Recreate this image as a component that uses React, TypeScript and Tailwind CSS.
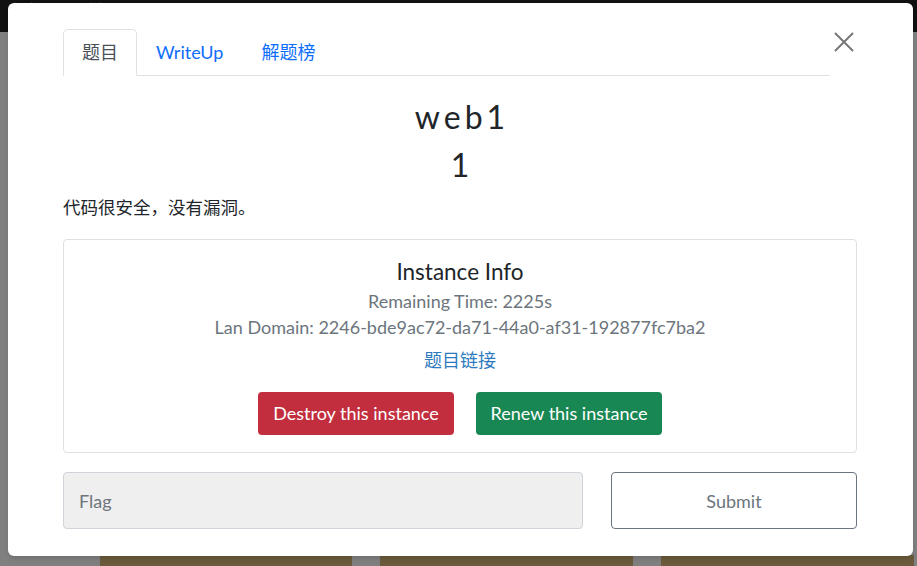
import React, { useState } from 'react';

const font = { fontFamily: 'Lato, "Noto Sans CJK SC", sans-serif' };

const tabs = ['题目', 'WriteUp', '解题榜'];

const App: React.FC = () => {
  const [activeTab, setActiveTab] = useState(0);
  const [flag, setFlag] = useState('');

  return (
    <div className="relative w-full h-[566px] overflow-hidden bg-[#808080]" style={font}>
      {/* page behind the modal */}
      <div className="h-[32px] bg-[#111111] text-[#3a3a3a] text-[14px] px-2 leading-[18px]">实验 · 题目 列表</div>
      <div className="flex gap-[28px] pl-[100px] pt-[523px]">
        <div className="w-[252px] h-[20px] bg-[#6b5b3c]" />
        <div className="w-[253px] h-[20px] bg-[#6b5b3c]" />
        <div className="w-[253px] h-[20px] bg-[#6b5b3c]" />
      </div>

      {/* modal */}
      <div className="absolute left-[8px] top-[3px] w-[905px] h-[553px] bg-white rounded-[6px] shadow-md pl-[55px] pr-[56px] pt-[26px] text-[#212529]">
        <div className="flex items-start">
          <ul className="flex flex-1 border-b border-[#dee2e6]">
            {tabs.map((t, i) => (
              <li key={t} className="-mb-px">
                <button
                  onClick={() => setActiveTab(i)}
                  className={`px-[18px] py-[9px] text-[18px] leading-[27px] rounded-t-[5px] border ${
                    activeTab === i
                      ? 'border-[#dee2e6] border-b-white bg-white text-[#495057]'
                      : 'border-transparent text-[#0d6efd]'
                  }`}
                >
                  {t}
                </button>
              </li>
            ))}
          </ul>
          <button className="w-[27px] h-[27px] mt-[-1px] flex items-center justify-center text-[#777]">
            <svg width="20" height="20" viewBox="0 0 20 20" fill="none" stroke="currentColor" strokeWidth="2">
              <path d="M1 1 L19 19 M19 1 L1 19" />
            </svg>
          </button>
        </div>

        <div className="w-[794px]">
          <h3 className="mt-[22px] text-center text-[32px] leading-[38px] tracking-[4px] pl-[4px]">web1</h3>
          <div className="mt-[10px] text-center text-[32px] leading-[38px]">1</div>
          <p className="mt-[11px] text-[17.5px] leading-[26px]">代码很安全，没有漏洞。</p>

          <div className="mt-[18px] border border-[#dee2e6] rounded-[4px] pt-[17px] pb-[17px] text-center">
            <h4 className="text-[22.5px] leading-[29px]">Instance Info</h4>
            <p className="mt-[2px] text-[18px] leading-[26px] text-[#6c757d]">Remaining Time: 2225s</p>
            <p className="text-[18px] leading-[26px] text-[#6c757d]">Lan Domain: 2246-bde9ac72-da71-44a0-af31-192877fc7ba2</p>
            <a href="#" className="inline-block mt-[7px] text-[18px] leading-[26px] text-[#2f7bbf]">题目链接</a>
            <div className="mt-[19px] flex justify-center gap-[22px]">
              <button className="h-[43px] w-[196px] rounded-[4px] bg-[#c22e3e] text-white text-[18px]">Destroy this instance</button>
              <button className="h-[43px] w-[186px] rounded-[4px] bg-[#198754] text-white text-[18px]">Renew this instance</button>
            </div>
          </div>

          <div className="mt-[19px] flex gap-[28px]">
            <input
              value={flag}
              onChange={e => setFlag(e.target.value)}
              placeholder="Flag"
              className="w-[520px] h-[57px] px-[15px] bg-[#efefef] border border-[#ced4da] rounded-[4px] text-[18px] text-[#212529] placeholder:text-[#6c757d] outline-none"
            />
            <button className="flex-1 h-[57px] border border-[#6c757d] rounded-[4px] text-[18px] text-[#6c757d] bg-white pt-px">Submit</button>
          </div>
        </div>
      </div>
    </div>
  );
};

export default App;
